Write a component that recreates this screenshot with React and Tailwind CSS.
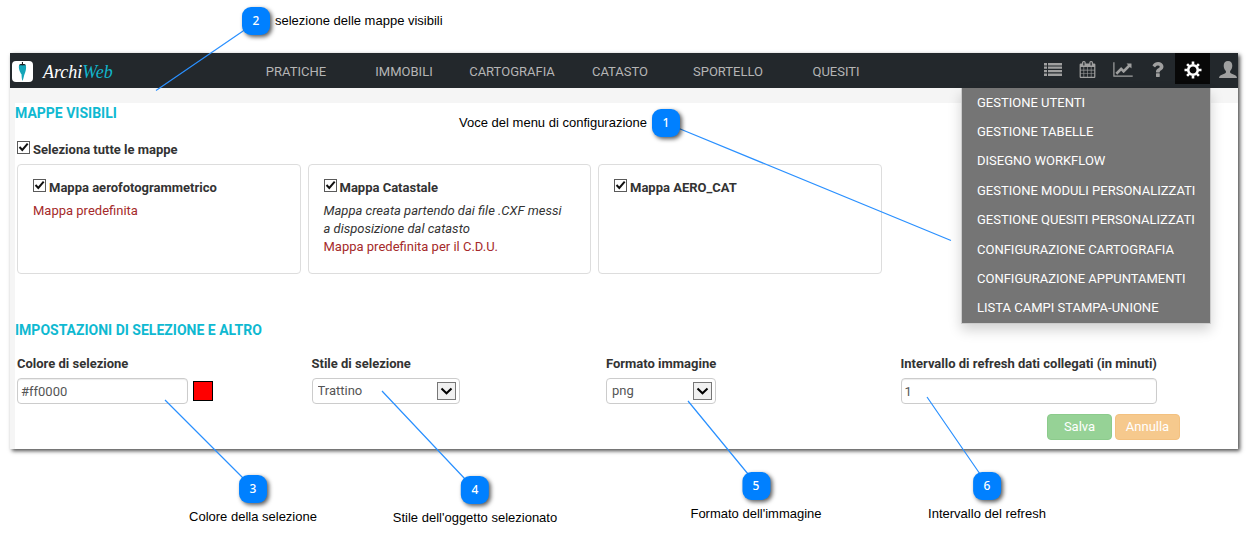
import { useState } from "react";
import clsx from "clsx";

const navItems = ["PRATICHE", "IMMOBILI", "CARTOGRAFIA", "CATASTO", "SPORTELLO", "QUESITI"];

const menuItems = [
  "GESTIONE UTENTI",
  "GESTIONE TABELLE",
  "DISEGNO WORKFLOW",
  "GESTIONE MODULI PERSONALIZZATI",
  "GESTIONE QUESITI PERSONALIZZATI",
  "CONFIGURAZIONE CARTOGRAFIA",
  "CONFIGURAZIONE APPUNTAMENTI",
  "LISTA CAMPI STAMPA-UNIONE",
];

const initialMaps = [
  { id: "aero", name: "Mappa aerofotogrammetrico", note: "Mappa predefinita", checked: true },
  {
    id: "catastale",
    name: "Mappa Catastale",
    description: "Mappa creata partendo dai file .CXF messi a disposizione dal catasto",
    note: "Mappa predefinita per il C.D.U.",
    checked: true,
  },
  { id: "aerocat", name: "Mappa AERO_CAT", checked: true },
];

/* ---------- icons ---------- */

const ListIcon = () => (
  <svg viewBox="0 0 18 13" className="w-[18px] h-[13px]" fill="currentColor">
    <path d="M0 0h3v2.400H0zM4 0h14v2.400H4zM0 3.600h3v2.200H0zM4 3.600h14v2.200H4zM0 7h3v2.200H0zM4 7h14v2.200H4zM0 10.600h3V13H0zM4 10.600h14V13H4z" />
  </svg>
);

const CalendarIcon = () => (
  <svg viewBox="0 0 1664 1792" className="w-[17px] h-[17px]" fill="currentColor">
    <path d="M128 1664h288v-288h-288v288zm352 0h320v-288h-320v288zm-352-352h288v-320h-288v320zm352 0h320v-320h-320v320zm-352-384h288v-288h-288v288zm736 736h320v-288h-320v288zm-384-736h320v-288h-320v288zm768 736h288v-288h-288v288zm-384-352h320v-320h-320v320zm-352-864v-288q0-13-9.5-22.500t-22.500-9.500h-64q-13 0-22.500 9.500t-9.500 22.500v288q0 13 9.500 22.500t22.500 9.500h64q13 0 22.500-9.500t9.500-22.500zm736 864h288v-320h-288v320zm-384-384h320v-288h-320v288zm384 0h288v-288h-288v288zm32-480v-288q0-13-9.500-22.500t-22.500-9.500h-64q-13 0-22.500 9.500t-9.500 22.500v288q0 13 9.500 22.500t22.500 9.500h64q13 0 22.500-9.500t9.500-22.500zm384-64v1280q0 52-38 90t-90 38h-1408q-52 0-90-38t-38-90v-1280q0-52 38-90t90-38h128v-96q0-66 47-113t113-47h64q66 0 113 47t47 113v96h384v-96q0-66 47-113t113-47h64q66 0 113 47t47 113v96h128q52 0 90 38t38 90z" />
  </svg>
);

const ChartIcon = () => (
  <svg viewBox="0 0 2048 1792" className="w-[20px] h-[17px]" fill="currentColor">
    <path d="M2048 1536v128h-2048v-1536h128v1408h1920zm-128-1248v435q0 21-19.500 29.500t-35.500-7.500l-121-121-633 633q-10 10-23 10t-23-10l-233-233-416 416-192-192 585-585q10-10 23-10t23 10l233 233 464-464-121-121q-16-16-7.500-35.500t29.500-19.500h435q14 0 23 9t9 23z" />
  </svg>
);

const QuestionIcon = () => (
  <svg viewBox="380 256 1032 1280" className="w-[13px] h-[15px]" fill="currentColor">
    <path d="M1088 1256v240q0 16-12 28t-28 12h-240q-16 0-28-12t-12-28v-240q0-16 12-28t28-12h240q16 0 28 12t12 28zm316-600q0 54-15.500 101t-35 76.500-55 59.500-57.500 43.500-61 35.500q-41 23-68.500 65t-27.500 67q0 17-12 32.500t-28 15.500h-240q-15 0-25.500-18.500t-10.500-37.500v-45q0-83 65-156.500t143-108.500q59-27 84-56t25-76q0-42-46.500-74t-107.500-32q-65 0-108 29-35 25-107 115-13 16-31 16-12 0-25-8l-164-125q-13-10-15.500-25t5.500-28q160-266 464-266 80 0 161 31t146 83 106 127.500 41 158.500z" />
  </svg>
);

const GearIcon = () => (
  <svg viewBox="-9 -9 18 18" className="w-[18px] h-[18px]" fill="none" stroke="currentColor">
    <circle r="4.800" strokeWidth="2.600" />
    <path
      strokeWidth="2.600"
      d="M0-5.500V-8.500M0 5.500V8.500M-5.500 0H-8.500M5.500 0H8.500M3.900-3.900L5.900-5.900M-3.900-3.900L-5.900-5.900M3.900 3.900L5.900 5.900M-3.900 3.900L-5.900 5.900"
    />
  </svg>
);

const UserIcon = () => (
  <svg viewBox="0 0 18 17" className="w-[18px] h-[17px]" fill="currentColor">
    <path d="M9 0c2.800 0 4.300 2 4.300 4.700 0 2.200-.9 4.200-2.200 5.300v1.200c0 .7.400 1.100 1.100 1.400l3.500 1.300c1.300.5 2 1.300 2.300 3.100H0c.3-1.800 1-2.600 2.300-3.100l3.500-1.300c.7-.3 1.100-.7 1.100-1.400V10C5.600 8.900 4.700 6.900 4.700 4.700 4.700 2 6.200 0 9 0z" />
  </svg>
);

const LogoIcon = () => (
  <svg viewBox="0 0 21 21" className="w-[21px] h-[21px]">
    <rect width="21" height="21" rx="4" fill="#fff" />
    <path d="M7.100 4c1.900-1.200 4.900-1.200 6.700 0 .8 3-.1 6.500-1.300 9.300-.6 1.600-.9 4.100-1.900 6.700-1-1.900-.9-4.400-1.100-6.700C7.900 11 6.200 7.500 7.100 4z" fill="#14a5b8" />
    <path d="M9.900 1h1.100v1.900c1.400 0 2.400.3 2.900 1.200-1 .4-1.700-.1-2.400.2-.6.200-1.300.2-1.900 0-.7-.3-1.600.2-2.600-.2.500-.9 1.500-1.200 2.900-1.200z" fill="#1b1f22" />
  </svg>
);

const toolbar = [
  { label: "Elenco", Icon: ListIcon },
  { label: "Calendario", Icon: CalendarIcon },
  { label: "Statistiche", Icon: ChartIcon },
  { label: "Aiuto", Icon: QuestionIcon },
  { label: "Configurazione", Icon: GearIcon, active: true },
];

/* ---------- form pieces ---------- */

function Checkbox({ id, checked, onChange }) {
  return (
    <span className="relative block w-[13px] h-[13px] shrink-0">
      <input
        id={id}
        type="checkbox"
        checked={checked}
        onChange={onChange}
        className="block appearance-none w-full h-full bg-white border border-[#5a5a5a]"
      />
      {checked && (
        <svg viewBox="0 0 13 13" className="absolute inset-0 pointer-events-none" fill="none" stroke="#111" strokeWidth="2">
          <path d="M2.500 6L5.300 9L10.700 2.700" />
        </svg>
      )}
    </span>
  );
}

function Select({ id, options, className }) {
  return (
    <div className={clsx("relative", className)}>
      <select
        id={id}
        className="block appearance-none w-full h-[26px] pl-[5px] pr-6 border border-[#ccc] rounded bg-white text-[#555]"
      >
        {options.map((o) => (
          <option key={o}>{o}</option>
        ))}
      </select>
      <svg viewBox="0 0 19 18" className="absolute right-1 top-1 w-[19px] h-[18px] pointer-events-none" fill="none">
        <rect x="0.500" y="0.500" width="18" height="17" fill="#f0f0f0" stroke="#777" />
        <path d="M4.500 6.500L9.500 11.300L14.500 6.500" stroke="#000" strokeWidth="2" />
      </svg>
    </div>
  );
}

function Field({ id, label, children }) {
  return (
    <div>
      <label htmlFor={id} className="block h-[24px] leading-5 font-bold whitespace-nowrap">
        {label}
      </label>
      {children}
    </div>
  );
}

const inputClass = "block h-[26px] px-[3px] border border-[#ccc] rounded bg-white text-[#555] shadow-[inset_0_1px_1px_rgba(0,0,0,0.075)]";

/* ---------- callouts ---------- */

function Callout({ n, text, side, className }) {
  return (
    <div
      className={clsx(
        "absolute flex items-center whitespace-nowrap text-black font-['Liberation_Sans',sans-serif] text-[13px] leading-4",
        side === "right" && "gap-[5px]",
        side === "left" && "flex-row-reverse gap-[5px]",
        side === "bottom" && "flex-col gap-[6px] -translate-x-1/2",
        className
      )}
    >
      <span className="flex items-center justify-center w-7 h-7 rounded-[9px] bg-[#0080ff] text-white text-[12px] font-['Noto_Sans',sans-serif] font-medium shadow-[2px_2px_4px_rgba(0,0,0,0.65)]">
        {n}
      </span>
      <span>{text}</span>
    </div>
  );
}

function Callouts() {
  return (
    <div className="absolute inset-0 pointer-events-none">
      <svg className="absolute left-0 top-0 w-[1247px] h-[541px]" viewBox="0 0 1247 541" stroke="#2a90ff" strokeWidth="1.200">
        <path d="M156 90.500L246 29M679 128.500L951 240.500M165 400L244 479M382 391L465 479M688 401L748 474M927 397L980 474" />
      </svg>
      <Callout n={2} side="right" text="selezione delle mappe visibili" className="left-[242px] top-[7px]" />
      <Callout n={1} side="left" text="Voce del menu di configurazione" className="right-[567px] top-[109px]" />
      <Callout n={3} side="bottom" text="Colore della selezione" className="left-[253px] top-[475px]" />
      <Callout n={4} side="bottom" text="Stile dell'oggetto selezionato" className="left-[475px] top-[476px]" />
      <Callout n={5} side="bottom" text="Formato dell'immagine" className="left-[756px] top-[472px]" />
      <Callout n={6} side="bottom" text="Intervallo del refresh" className="left-[987px] top-[472px]" />
    </div>
  );
}

/* ---------- page ---------- */

function Header() {
  return (
    <header className="relative flex h-[35px] bg-[#23282c] text-[#b5b5b5]">
      <a href="#" className="flex items-center w-[232px] pl-[2px] pt-[2px] gap-[10px]">
        <LogoIcon />
        <span className="font-['Liberation_Serif',serif] italic text-[18px] leading-6 text-white">
          Archi<span className="text-[#12b5cb]">Web</span>
        </span>
      </a>
      <nav className="flex">
        {navItems.map((item) => (
          <a key={item} href="#" className="flex items-center justify-center w-[108px] pt-[2px]">
            {item}
          </a>
        ))}
      </nav>
      <div className="flex ml-auto text-[#a0a0a0]">
        {toolbar.map(({ label, Icon, active }) => (
          <button
            key={label}
            type="button"
            aria-label={label}
            className={clsx("flex items-center justify-center w-[35px] h-[31px] pt-[2px]", active && "bg-[#080808] text-white")}
          >
            <Icon />
          </button>
        ))}
        <button type="button" aria-label="Utente" className="flex items-center justify-end w-7 h-[31px] pr-[1px] pt-[2px]">
          <UserIcon />
        </button>
      </div>

      <div className="absolute z-10 right-[27px] top-full w-[250px] h-[236px] grid bg-[#757575] border border-t-0 border-[#ccc] text-white shadow-[0_6px_12px_rgba(0,0,0,0.18)]">
        {menuItems.map((item) => (
          <a key={item} href="#" className="flex items-center pl-[15px] whitespace-nowrap">
            {item}
          </a>
        ))}
      </div>
    </header>
  );
}

export default function App() {
  const [maps, setMaps] = useState(initialMaps);
  const [color, setColor] = useState("#ff0000");
  const [refresh, setRefresh] = useState("1");

  const toggle = (id) => setMaps(maps.map((m) => (m.id === id ? { ...m, checked: !m.checked } : m)));
  const allChecked = maps.every((m) => m.checked);
  const toggleAll = () => setMaps(maps.map((m) => ({ ...m, checked: !allChecked })));

  return (
    <div className="relative min-h-screen bg-white pt-[53px] pl-[10px] pr-[9px] font-[Roboto,sans-serif] text-[13px] leading-5 text-[#333]">
      <div className="shadow-[2px_2px_4px_rgba(0,0,0,0.7)]">
        <Header />
        <main className="bg-[#f5f5f5] pt-[15px] pl-[5px]">
          <div className="bg-white pb-[9px]">
            <h2 className="text-[14px] leading-5 font-bold text-[#0fb9d1]">MAPPE VISIBILI</h2>
            <div className="flex gap-[3px] mt-[17px] ml-[2px] items-start">
              <span className="pt-[1px]">
                <Checkbox id="all" checked={allChecked} onChange={toggleAll} />
              </span>
              <label htmlFor="all" className="font-bold">
                Seleziona tutte le mappe
              </label>
            </div>

            <div className="grid grid-cols-4 gap-[7px] mt-1 ml-[2px] mr-[66px]">
              {maps.map((m) => (
                <div key={m.id} className="h-[110px] pt-[13px] px-[15px] border border-[#ddd] rounded">
                  <div className="flex gap-[3px] items-start">
                    <span className="pt-[1px]">
                      <Checkbox id={m.id} checked={m.checked} onChange={() => toggle(m.id)} />
                    </span>
                    <label htmlFor={m.id} className="font-bold">
                      {m.name}
                    </label>
                  </div>
                  <div className="mt-1 leading-[18px]">
                    {m.description && <p className="italic pr-2">{m.description}</p>}
                    {m.note && <p className="text-[#a52a2a]">{m.note}</p>}
                  </div>
                </div>
              ))}
            </div>

            <h2 className="mt-[46px] text-[14px] leading-5 font-bold text-[#0fb9d1]">IMPOSTAZIONI DI SELEZIONE E ALTRO</h2>
            <div className="grid grid-cols-4 mt-[14px] ml-[2px] mr-[43px]">
              <Field id="color" label="Colore di selezione">
                <div className="flex items-center gap-[5px]">
                  <input
                    id="color"
                    type="text"
                    value={color}
                    onChange={(e) => setColor(e.target.value)}
                    className={clsx(inputClass, "w-[171px]")}
                  />
                  <span className="w-5 h-5 border border-black" style={{ backgroundColor: color }} />
                </div>
              </Field>
              <Field id="style" label="Stile di selezione">
                <Select id="style" options={["Trattino", "Linea", "Punto"]} className="w-[148px]" />
              </Field>
              <Field id="format" label="Formato immagine">
                <Select id="format" options={["png", "jpg", "gif"]} className="w-[110px]" />
              </Field>
              <Field id="refresh" label="Intervallo di refresh dati collegati (in minuti)">
                <input
                  id="refresh"
                  type="text"
                  value={refresh}
                  onChange={(e) => setRefresh(e.target.value)}
                  className={clsx(inputClass, "w-[256px]")}
                />
              </Field>
            </div>

            <div className="flex justify-end gap-[3px] mt-[10px] mr-[58px]">
              <button type="button" className="w-[65px] h-[26px] rounded bg-[#96d296] border border-[#8ccb8c] text-white">
                Salva
              </button>
              <button type="button" className="w-[65px] h-[26px] rounded bg-[#f6c98d] border border-[#f3c180] text-white">
                Annulla
              </button>
            </div>
          </div>
        </main>
      </div>
      <Callouts />
    </div>
  );
}
